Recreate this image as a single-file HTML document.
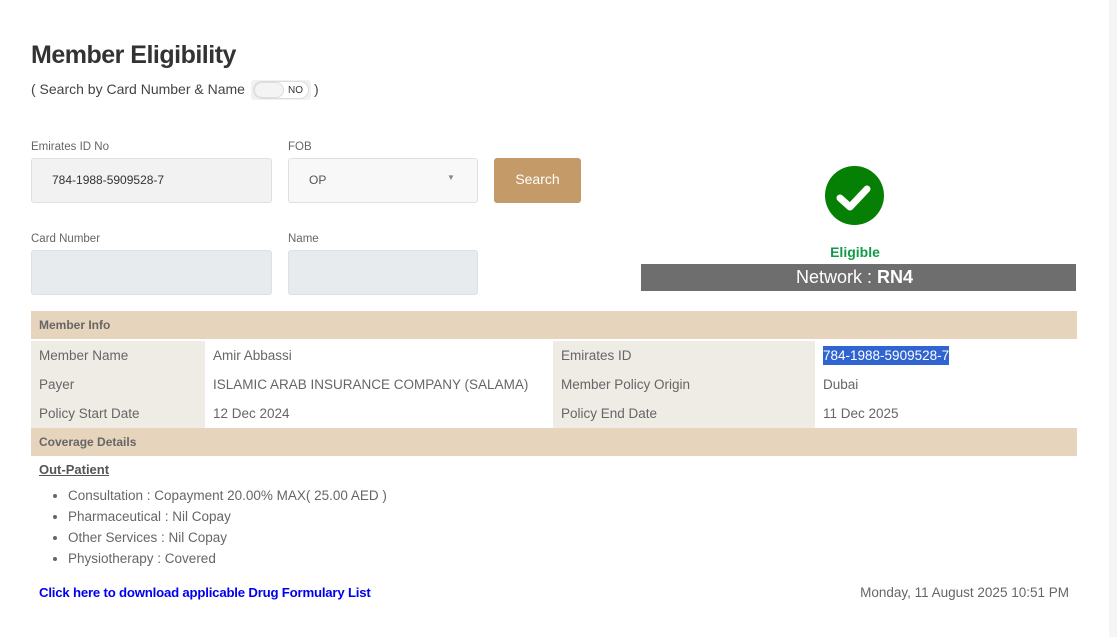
<!DOCTYPE html>
<html><head><style>
*{margin:0;padding:0;box-sizing:border-box}
body{width:1117px;height:637px;background:#fff;font-family:"Liberation Sans",Arial,sans-serif;color:#555;position:relative;overflow:hidden}
.a{position:absolute;white-space:nowrap}
.side{position:absolute;left:1109px;top:0;width:8px;height:637px;background:#f5f5f5}
.lbl{font-size:11.5px;color:#666}
.inp{position:absolute;border:1px solid #e0e0e0;border-radius:3px}
.row{position:absolute;left:31px;width:1046px;height:29px;font-size:13.5px;color:#666}
.row div{position:absolute;top:0;height:29px;line-height:29px;padding-left:8px}
.hd{position:absolute;left:31px;width:1046px;height:28px;background:#e6d5bc;font-size:12px;font-weight:bold;color:#666;line-height:28px;padding-left:8px}
ul li{font-size:13.5px;color:#666;height:21px;line-height:21px}
</style></head><body>
<div class="side"></div>
<div class="a" style="left:31px;top:41px;font-size:25px;font-weight:bold;color:#333;letter-spacing:-0.5px">Member Eligibility</div>
<div class="a" style="left:31px;top:81px;font-size:14px;color:#444">( Search by Card Number &amp; Name</div>
<div class="a" style="left:251px;top:80px;width:60px;height:20px;background:#f1f1f1;border-radius:3px"></div>
<div class="a" style="left:253px;top:81px;width:56px;height:18px;background:#fff;border:1px solid #ddd;border-radius:9px"></div>
<div class="a" style="left:254px;top:82px;width:30px;height:16px;background:#f4f4f4;border:1px solid #ddd;border-radius:8px"></div>
<div class="a" style="left:288px;top:85px;font-size:10px;color:#333">NO</div>
<div class="a" style="left:314px;top:81px;font-size:14px;color:#444">)</div>

<div class="a lbl" style="left:31px;top:141px">Emirates ID No</div>
<div class="inp" style="left:31px;top:158px;width:241px;height:45px;background:#f2f2f2"></div>
<div class="a" style="left:52px;top:173px;font-size:12px;color:#333">784-1988-5909528-7</div>
<div class="a lbl" style="left:288px;top:141px">FOB</div>
<div class="inp" style="left:288px;top:158px;width:190px;height:45px;background:#f8f8f8"></div>
<div class="a" style="left:309px;top:173px;font-size:12px;color:#555">OP</div>
<div class="a" style="left:447px;top:173px;font-size:8px;color:#888">&#9660;</div>
<div class="a" style="left:494px;top:158px;width:87px;height:45px;background:#c49a68;border-radius:3px;color:#fff;font-size:14px;text-align:center;line-height:43px">Search</div>

<div class="a lbl" style="left:31px;top:233px">Card Number</div>
<div class="inp" style="left:31px;top:250px;width:241px;height:45px;background:#e8ebee"></div>
<div class="a lbl" style="left:288px;top:233px">Name</div>
<div class="inp" style="left:288px;top:250px;width:190px;height:45px;background:#e8ebee"></div>

<svg class="a" style="left:825px;top:166px" width="59" height="59" viewBox="0 0 59 59"><circle cx="29.5" cy="29.5" r="29.5" fill="#058005"/><path d="M15 32 L25 41 L42 23" stroke="#fff" stroke-width="7" fill="none" stroke-linecap="round" stroke-linejoin="round"/></svg>
<div class="a" style="left:641px;top:244px;width:428px;text-align:center;font-size:14px;font-weight:bold;color:#129a4a">Eligible</div>
<div class="a" style="left:641px;top:264px;width:435px;height:27px;background:#6e6e6e;color:#fff;text-align:center;font-size:18px;line-height:27px;padding-right:8px">Network : <b>RN4</b></div>

<div class="hd" style="top:311px">Member Info</div>
<div class="row" style="top:341px"><div style="left:0;width:174px;background:#efebe5">Member Name</div><div style="left:174px;width:348px">Amir Abbassi</div><div style="left:522px;width:262px;background:#efebe5">Emirates ID</div><div style="left:784px;width:262px"><span style="background:#3064d0;color:#fff;padding:2px 0">784-1988-5909528-7</span></div></div>
<div class="row" style="top:370px"><div style="left:0;width:174px;background:#efebe5">Payer</div><div style="left:174px;width:348px">ISLAMIC ARAB INSURANCE COMPANY (SALAMA)</div><div style="left:522px;width:262px;background:#efebe5">Member Policy Origin</div><div style="left:784px;width:262px">Dubai</div></div>
<div class="row" style="top:399px"><div style="left:0;width:174px;background:#efebe5">Policy Start Date</div><div style="left:174px;width:348px">12 Dec 2024</div><div style="left:522px;width:262px;background:#efebe5">Policy End Date</div><div style="left:784px;width:262px">11 Dec 2025</div></div>
<div class="hd" style="top:428px">Coverage Details</div>
<div class="a" style="left:39px;top:462px;font-size:13px;font-weight:bold;text-decoration:underline;color:#555">Out-Patient</div>
<ul class="a" style="left:68px;top:485px;list-style:disc">
<li>Consultation : Copayment 20.00% MAX( 25.00 AED )</li>
<li>Pharmaceutical : Nil Copay</li>
<li>Other Services : Nil Copay</li>
<li>Physiotherapy : Covered</li>
</ul>
<div class="a" style="left:39px;top:585px;font-size:13.2px;font-weight:bold;color:#0000ee;letter-spacing:-0.2px">Click here to download applicable Drug Formulary List</div>
<div class="a" style="right:48px;top:585px;font-size:13.5px;color:#666">Monday, 11 August 2025 10:51 PM</div>
</body></html>
